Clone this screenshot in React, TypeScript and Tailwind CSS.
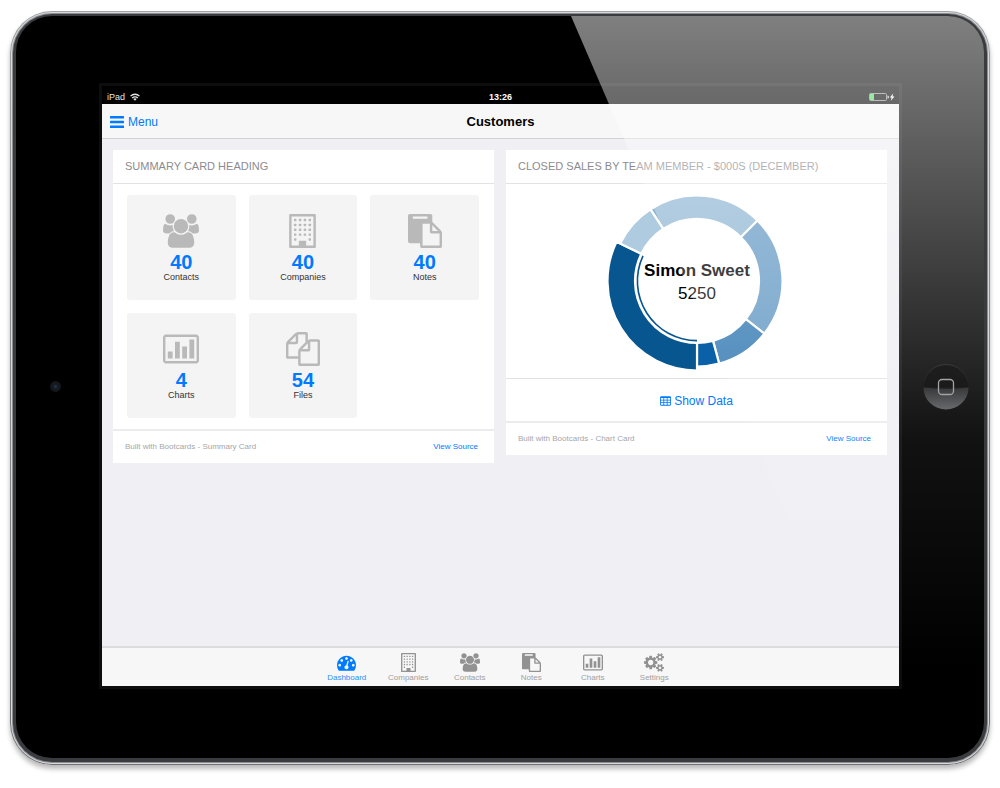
import type { ReactNode } from "react";

const GREY_BORDER = "border-[#e2e2e4]";

function Glyph({ box, d, className, children }: { box: string; d?: string; className?: string; children?: ReactNode }) {
  return (
    <svg viewBox={box} fill="currentColor" fillRule="evenodd" aria-hidden="true" className={className}>
      {d && <path d={d} />}
      {children}
    </svg>
  );
}

const USERS =
  "M593 896q-162 5-265 128h-134q-82 0-138-40.5t-56-118.5q0-353 124-353 6 0 43.5 21t97.5 42.5 119 21.5q67 0 133-23-5 37-5 66 0 139 81 256zm1071 637q0 120-73 189.5t-194 69.5h-874q-121 0-194-69.5t-73-189.5q0-53 3.5-103.5t14-109 26.5-108.5 43-97.5 62-81 85.5-53.5 111.5-20q10 0 43 21.5t73 48 107 48 135 21.5 135-21.5 107-48 73-48 43-21.5q61 0 111.5 20t85.5 53.5 62 81 43 97.5 26.5 108.5 14 109 3.5 103.5zm-1024-1277q0 106-75 181t-181 75-181-75-75-181 75-181 181-75 181 75 75 181zm704 384q0 159-112.5 271.5t-271.5 112.5-271.5-112.5-112.5-271.5 112.5-271.5 271.5-112.5 271.5 112.5 112.5 271.5zm576 225q0 78-56 118.5t-138 40.5h-134q-103-123-265-128 81-117 81-256 0-29-5-66 66 23 133 23 59 0 119-21.5t97.5-42.5 43.5-21q124 0 124 353zm-128-609q0 106-75 181t-181 75-181-75-75-181 75-181 181-75 181 75 75 181z";
const PASTE =
  "M768 1664h896v-640h-416q-40 0-68-28t-28-68v-416h-384v1152zm256-1440v-64q0-13-9.5-22.5t-22.5-9.5h-704q-13 0-22.5 9.5t-9.5 22.5v64q0 13 9.5 22.5t22.5 9.5h704q13 0 22.5-9.5t9.5-22.5zm256 672h299l-299-299v299zm512 128v672q0 40-28 68t-68 28h-960q-40 0-68-28t-28-68v-160h-544q-40 0-68-28t-28-68v-1344q0-40 28-68t68-28h1088q40 0 68 28t28 68v328q21 13 36 28l408 408q28 28 48 76t20 88z";
const FILES =
  "M1696 384q40 0 68 28t28 68v1216q0 40-28 68t-68 28h-960q-40 0-68-28t-28-68v-288h-544q-40 0-68-28t-28-68v-672q0-40 20-88t48-76l408-408q28-28 76-48t88-20h416q40 0 68 28t28 68v328q68-40 128-40h416zm-544 213l-299 299h299v-299zm-640-384l-299 299h299v-299zm196 647l316-316v-416h-384v416q0 40-28 68t-68 28h-416v640h512v-256q0-40 20-88t48-76zm956 804v-1152h-384v416q0 40-28 68t-68 28h-416v640h896z";
const GAUGE =
  "M384 1152q0-53-37.5-90.5t-90.5-37.5-90.5 37.5-37.5 90.5 37.5 90.5 90.5 37.5 90.5-37.5 37.5-90.5zm192-448q0-53-37.5-90.5t-90.5-37.5-90.5 37.5-37.5 90.5 37.5 90.5 90.5 37.5 90.5-37.5 37.5-90.5zm428 481l101-382q6-26-7.5-48.5t-38.5-29.5-48 6.5-30 39.5l-101 382q-60 5-107 43.5t-63 98.5q-20 77 20 146t117 89 146-20 89-117q16-60-6-117t-72-91zm660-33q0-53-37.5-90.5t-90.5-37.5-90.5 37.5-37.5 90.5 37.5 90.5 90.5 37.5 90.5-37.5 37.5-90.5zm-640-640q0-53-37.5-90.5t-90.5-37.5-90.5 37.5-37.5 90.5 37.5 90.5 90.5 37.5 90.5-37.5 37.5-90.5zm448 192q0-53-37.5-90.5t-90.5-37.5-90.5 37.5-37.5 90.5 37.5 90.5 90.5 37.5 90.5-37.5 37.5-90.5zm320 448q0 261-141 483-19 29-54 29h-1402q-35 0-54-29-141-221-141-483 0-182 71-348t191-286 286-191 348-71 348 71 286 191 191 286 71 348z";
const SMALL_COG =
  "v140q0 16-149 31-12 27-30 52 51 113 51 138 0 4-4 7-122 71-124 71-8 0-46-47t-52-68q-20 2-30 2t-30-2q-14 21-52 68t-46 47q-2 0-124-71-4-3-4-7 0-25 51-138-18-25-30-52-149-15-149-31v-140q0-16 149-31 13-29 30-52-51-113-51-138 0-4 4-7 4-2 35-20t59-34 30-16q8 0 46 46.5t52 67.5q20-2 30-2t30 2q51-71 92-112l6-2q4 0 124 70 4 3 4 7 0 25-51 138 17 23 30 52 149 15 149 31z";
const COGS =
  "M896 896q0-106-75-181t-181-75-181 75-75 181 75 181 181 75 181-75 75-181zm768 512q0-52-38-90t-90-38-90 38-38 90q0 53 37.5 90.5t90.5 37.5 90.5-37.5 37.5-90.5zm0-1024q0-52-38-90t-90-38-90 38-38 90q0 53 37.5 90.5t90.5 37.5 90.5-37.5 37.5-90.5zm-384 421v185q0 10-7 19.5t-16 10.5l-155 24q-11 35-32 76 34 48 90 115 7 11 7 20 0 12-7 19-23 30-82.5 89.5t-78.5 59.5q-11 0-21-7l-115-90q-37 19-77 31-11 108-23 155-7 24-30 24h-186q-11 0-20-7.5t-10-17.5l-23-153q-34-10-75-31l-118 89q-7 7-20 7-11 0-21-8-144-133-144-160 0-9 7-19 10-14 41-53t47-61q-23-44-35-82l-152-24q-10-1-17-9.5t-7-19.5v-185q0-10 7-19.5t16-10.5l155-24q11-35 32-76-34-48-90-115-7-11-7-20 0-12 7-20 22-30 82-89t79-59q11 0 21 7l115 90q34-18 77-32 11-108 23-154 7-24 30-24h186q11 0 20 7.5t10 17.5l23 153q34 10 75 31l118-89q8-7 20-7 11 0 21 8 144 133 144 160 0 8-7 19-12 16-42 54t-45 60q23 48 34 82l152 23q10 2 17 10.5t7 19.5zM1920 1338" +
  SMALL_COG +
  "M1920 314" +
  SMALL_COG;

type IconProps = { className?: string };

const UsersIcon = ({ className }: IconProps) => <Glyph box="0 0 1920 1792" d={USERS} className={className} />;
const PasteIcon = ({ className }: IconProps) => <Glyph box="0 0 1792 1792" d={PASTE} className={className} />;
const FilesIcon = ({ className }: IconProps) => <Glyph box="0 0 1792 1792" d={FILES} className={className} />;
const GaugeIcon = ({ className }: IconProps) => <Glyph box="0 0 1792 1792" d={GAUGE} className={className} />;
const CogsIcon = ({ className }: IconProps) => <Glyph box="0 0 1920 1792" d={COGS} className={className} />;

const BuildingIcon = ({ className }: IconProps) => (
  <Glyph
    box="0 0 1408 1792"
    className={className}
    d="M1344 0q26 0 45 19t19 45v1664q0 26-19 45t-45 19h-1280q-26 0-45-19t-19-45v-1664q0-26 19-45t45-19h1280zm-64 128h-1152v1536h384v-224q0-13 9.5-22.5t22.5-9.5h320q13 0 22.5 9.5t9.5 22.5v224h384v-1536z"
  >
    {[256, 512, 768, 1024, 1280].map((y) =>
      [256, 512, 768, 1024]
        .filter((x) => y < 1280 || x === 256 || x === 1024)
        .map((x) => <rect key={`${x}-${y}`} x={x} y={y} width="128" height="128" rx="32" />),
    )}
  </Glyph>
);

const ChartIcon = ({ className }: IconProps) => (
  <Glyph
    box="0 0 1920 1792"
    className={className}
    d="M160 128h1600q66 0 113 47t47 113v1216q0 66-47 113t-113 47h-1600q-66 0-113-47t-47-113v-1216q0-66 47-113t113-47zm0 128q-32 0-32 32v1216q0 32 32 32h1600q32 0 32-32v-1216q0-32-32-32zM256 1024h256v384h-256zM640 512h256v896h-256zM1024 768h256v640h-256zM1408 384h256v1024h-256z"
  />
);

const TableIcon = ({ className }: IconProps) => (
  <Glyph
    box="0 0 1664 1408"
    className={className}
    d="M160 0h1344q66 0 113 47t47 113v1088q0 66-47 113t-113 47h-1344q-66 0-113-47t-47-113v-1088q0-66 47-113t113-47zM128 256v256h384v-256zM640 256v256h384v-256zM1152 256v256h384v-256zM128 640v256h384v-256zM640 640v256h384v-256zM1152 640v256h384v-256zM128 1024v256h384v-256zM640 1024v256h384v-256zM1152 1024v256h384v-256z"
  />
);

const BarsIcon = ({ className }: IconProps) => (
  <Glyph box="0 0 28 24" className={className}>
    <rect width="28" height="5" rx="1" />
    <rect y="9.5" width="28" height="5" rx="1" />
    <rect y="19" width="28" height="5" rx="1" />
  </Glyph>
);

const WifiIcon = ({ className }: IconProps) => (
  <svg viewBox="0 0 18 14" fill="none" stroke="currentColor" strokeWidth="2.4" aria-hidden="true" className={className}>
    <path d="M1 5.4a11.3 11.3 0 0 1 16 0" />
    <path d="M4 8.8a7 7 0 0 1 10 0" />
    <path d="M9 13.800l-3-3a4.300 4.300 0 0 1 6 0z" fill="currentColor" stroke="none" />
  </svg>
);

function StatusBar() {
  return (
    <div className="grid h-[18px] grid-cols-3 items-center bg-black px-1 pt-[3px] text-[9px] leading-3 text-[#e5e5e5]">
      <span className="flex items-center gap-[5px] pl-px">
        iPad
        <WifiIcon className="h-2 w-[10px]" />
      </span>
      <span className="text-center font-bold text-white">13:26</span>
      <svg viewBox="0 0 26 8" aria-label="Battery charging" role="img" className="h-2 w-[26px] justify-self-end">
        <rect x="0.5" y="0.5" width="17" height="7" rx="1" fill="none" stroke="#8d8d8d" />
        <rect x="1" y="1" width="4" height="6" fill="#4cd964" />
        <path d="M18.500 2.500q1.500 0 1.500 1.500t-1.500 1.500z" fill="#d0d0d0" />
        <path d="M24.200 0.500l-3.400 4h1.900l-.9 3.300 3.700-4.300h-2z" fill="#ffffff" />
      </svg>
    </div>
  );
}

const stats = [
  { label: "Contacts", value: 40, Icon: UsersIcon, size: "h-[34px] w-9" },
  { label: "Companies", value: 40, Icon: BuildingIcon, size: "h-[34px] w-[27px]" },
  { label: "Notes", value: 40, Icon: PasteIcon, size: "h-[34px] w-[34px]" },
  { label: "Charts", value: 4, Icon: ChartIcon, size: "h-[34px] w-9" },
  { label: "Files", value: 54, Icon: FilesIcon, size: "h-[34px] w-[34px]" },
];

function Card({ title, source, children }: { title: string; source: string; children: ReactNode }) {
  return (
    <section className="bg-white">
      <h2 className={`flex h-[34px] items-center border-b px-3 text-[11px] whitespace-nowrap text-[#8b8b8f] uppercase ${GREY_BORDER}`}>
        {title}
      </h2>
      {children}
      <footer className="flex h-[34px] items-center justify-between border-t-2 border-[#ececee] pr-4 pl-3 text-[8px]">
        <small className="text-[8px] text-[#a6a6a8]">Built with Bootcards - {source}</small>
        <a href="#source" className="text-[#007aff]">
          View Source
        </a>
      </footer>
    </section>
  );
}

function SummaryCard() {
  return (
    <Card title="Summary Card Heading" source="Summary Card">
      <div className="grid grid-cols-3 gap-[13px] pt-[11px] pr-[15px] pb-[11px] pl-[14px]">
        {stats.map(({ label, value, Icon, size }) => (
          <a
            key={label}
            href={`#${label.toLowerCase()}`}
            className="flex h-[105px] flex-col items-center rounded-[3px] bg-[#f4f4f4] pt-[19px] text-[#b9b9b9]"
          >
            <Icon className={size} />
            <span className="mt-[3px] text-[20px] leading-[22px] font-bold text-[#007aff]">{value}</span>
            <span className="text-[9px] leading-[8px] text-[#333333]">{label}</span>
          </a>
        ))}
      </div>
    </Card>
  );
}

const slices = [
  { from: -33, to: 45, color: "#8fb6d3" },
  { from: 45, to: 128, color: "#679bc5" },
  { from: 128, to: 165, color: "#3a7eb5" },
  { from: 165, to: 180, color: "#0a61a8" },
  { from: 180, to: 296, color: "#075690", selected: true },
  { from: 296, to: 327, color: "#aecbe0" },
];

function ringPath(from: number, to: number, inner: number, outer: number) {
  const at = (deg: number, r: number) => {
    const a = (deg * Math.PI) / 180;
    return `${(100 + r * Math.sin(a)).toFixed(2)} ${(100 - r * Math.cos(a)).toFixed(2)}`;
  };
  return `M${at(from, outer)}A${outer} ${outer} 0 0 1 ${at(to, outer)}L${at(to, inner)}A${inner} ${inner} 0 0 0 ${at(from, inner)}Z`;
}

function ChartCard() {
  return (
    <Card title="Closed Sales by Team Member - $000s (December)" source="Chart Card">
      <div className="flex h-[194px] items-center justify-center">
        <svg viewBox="0 0 200 200" role="img" aria-label="Closed sales by team member" className="size-[200px] shrink-0">
          {slices.map((s) => (
            <path
              key={s.from}
              d={ringPath(s.from, s.to, 62, s.selected ? 89.5 : 85.5)}
              fill={s.color}
              stroke="#ffffff"
              strokeWidth="2.2"
            />
          ))}
          <path d={ringPath(180, 295, 58.8, 60.4)} fill="#075690" />
          <text x="100" y="95" textAnchor="middle" className="fill-black text-[17px] font-bold">
            Simon Sweet
          </text>
          <text x="100" y="118" textAnchor="middle" className="fill-black text-[17px]">
            5250
          </text>
        </svg>
      </div>
      <div className={`flex h-[43px] items-center justify-center border-t pt-px ${GREY_BORDER}`}>
        <button type="button" className="flex items-center gap-[3px] text-[12px] text-[#007aff]">
          <TableIcon className="h-[10px] w-[11px]" />
          Show Data
        </button>
      </div>
    </Card>
  );
}

const tabs = [
  { label: "Dashboard", Icon: GaugeIcon, size: "h-[19px] w-[19px]", active: true },
  { label: "Companies", Icon: BuildingIcon, size: "h-[19px] w-[15px]" },
  { label: "Contacts", Icon: UsersIcon, size: "h-[19px] w-5" },
  { label: "Notes", Icon: PasteIcon, size: "h-[19px] w-[19px]" },
  { label: "Charts", Icon: ChartIcon, size: "h-[19px] w-5" },
  { label: "Settings", Icon: CogsIcon, size: "h-[19px] w-5" },
];

function Screen() {
  return (
    <div className="flex min-w-0 flex-1 flex-col bg-[#efeff4] outline-3 outline-[#0d0d0d]">
      <StatusBar />
      <header className="grid h-[35px] grid-cols-3 items-center border-b border-[#d3d3d6] bg-[#f7f7f7] px-2 pt-px">
        <button type="button" className="flex items-center gap-1 justify-self-start text-[12px] text-[#007aff]">
          <BarsIcon className="h-3 w-[14px]" />
          Menu
        </button>
        <h1 className="text-center text-[13px] font-bold text-black">Customers</h1>
      </header>
      <main className="grid flex-1 grid-cols-2 items-start gap-3 py-[11px] pr-3 pl-[11px]">
        <SummaryCard />
        <ChartCard />
      </main>
      <nav className="flex h-10 justify-center border-t-2 border-[#dcdce0] bg-[#f7f7f7]">
        <div className="grid w-full max-w-[369px] grid-cols-6">
          {tabs.map(({ label, Icon, size, active }) => (
            <a
              key={label}
              href={`#${label.toLowerCase()}`}
              className={`flex flex-col items-center pt-[5px] text-[8px] leading-3 ${active ? "text-[#007aff]" : "text-[#929292]"}`}
            >
              <Icon className={size} />
              <span className={active ? "text-[#2b90ff]" : "text-[#a0a0a0]"}>{label}</span>
            </a>
          ))}
        </div>
      </nav>
    </div>
  );
}

function HomeButton() {
  return (
    <button type="button" aria-label="Home" className="size-[46px]">
      <svg viewBox="0 0 46 46" className="size-full">
        <defs>
          <linearGradient id="home-fill" x1="0" y1="0" x2="0" y2="1">
            <stop offset="0" stopColor="#37383a" />
            <stop offset="1" stopColor="#68696c" />
          </linearGradient>
          <linearGradient id="home-rim" x1="0" y1="0" x2="0" y2="1">
            <stop offset="0" stopColor="#3a3a3a" />
            <stop offset="1" stopColor="#1c1c1c" />
          </linearGradient>
        </defs>
        <path d="M0.500 23a22.500 22.500 0 0 1 45 0" fill="#141414" fillOpacity="0.4" stroke="url(#home-rim)" />
        <path d="M0.500 23.500q22.500 2.500 45 0a22.500 22 0 0 1-45 0z" fill="url(#home-fill)" />
        <rect x="15.500" y="15.500" width="15" height="15" rx="3.500" fill="none" stroke="#a3a3a3" strokeWidth="1.300" />
      </svg>
    </button>
  );
}

export default function App() {
  return (
    <div className="flex min-h-screen bg-white px-[10px] pt-[11px] pb-[23px] font-['Liberation_Sans',Arial,sans-serif]">
      <div className="flex flex-1 rounded-[42px] bg-linear-to-b from-[#a0a2a5] to-[#707176] p-px shadow-[0_4px_5px_rgba(0,0,0,0.28)]">
        <div className="flex flex-1 rounded-[41px] bg-[#d6d8da] p-px">
          <div className="flex flex-1 rounded-[40px] bg-[#8b8d91] p-px">
            <div className="flex flex-1 rounded-[39px] bg-[#3a3b3e] px-[3px] pt-[2px] pb-1">
              <div className="relative flex flex-1 overflow-hidden rounded-[36px] bg-black pt-[70px] pb-[72px]">
                <div className="flex w-[86px] shrink-0 items-center justify-center pr-[8px]">
                  <span className="size-[11px] rounded-full border border-[#17181a] bg-radial from-[#1d3a63] via-[#15191e] via-40% to-[#16181a]" />
                </div>
                <Screen />
                <div className="w-[85px] shrink-0" />
                <div className="pointer-events-none absolute inset-0 bg-linear-to-b from-white/50 via-white/7 via-57% to-transparent to-88% [clip-path:polygon(555px_0,100%_0,100%_100%,875px_100%)]" />
                <div className="absolute inset-y-0 right-0 flex w-[85px] items-center justify-center pl-[9px]">
                  <HomeButton />
                </div>
              </div>
            </div>
          </div>
        </div>
      </div>
    </div>
  );
}
